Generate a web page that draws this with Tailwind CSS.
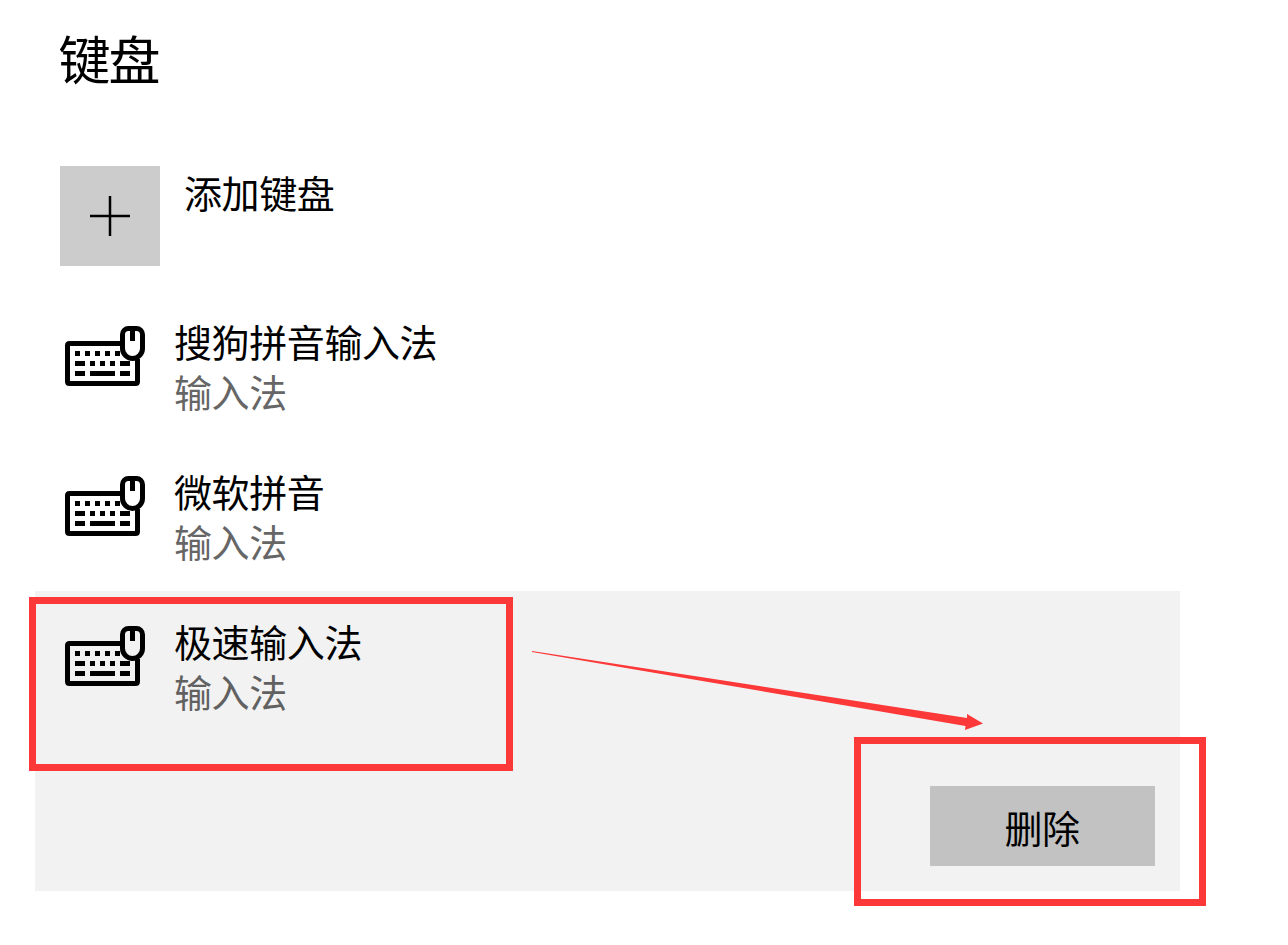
<!DOCTYPE html>
<html lang="zh-CN">
<head>
  <meta charset="UTF-8" />
  <meta name="viewport" content="width=device-width, initial-scale=1.0" />
  <title>键盘</title>
  <script src="https://cdn.jsdelivr.net/npm/@tailwindcss/browser@4"></script>
</head>
<body class="bg-white text-black font-['Noto_Sans_CJK_SC',sans-serif] min-h-screen overflow-hidden">
  <!-- Icono compartido -->
  <svg class="hidden">
    <symbol id="teclado" viewBox="0 0 80 60">
      <path d="M57 17.500H4.500Q2.500 17.500 2.500 19.500V55.500Q2.500 57.500 4.500 57.500H70.500Q72.500 57.500 72.500 55.500V33" fill="none" stroke="#000" stroke-width="5" />
      <path d="M10 25h5v5h-5zM20 25h5v5h-5zM30 25h5v5h-5zM40 25h5v5h-5zM50 25h5v5h-5zM10 35h10v5H10zM25 35h5v5h-5zM35 35h5v5h-5zM45 35h5v5h-5zM55 35h10v5H55zM10 45h10v5H10zM25 45h25v5H25zM55 45h10v5H55z" />
      <path d="M63.500 2.500H71.500A6 6 0 0 1 77.500 8.500V22.500A10 10 0 0 1 57.500 22.500V8.500A6 6 0 0 1 63.500 2.500Z" fill="none" stroke="#000" stroke-width="5" />
      <path d="M65 4h5v11h-5z" />
    </symbol>
  </svg>

  <main class="relative ml-[35px] w-[1145px]">
    <h1 class="h-[141px] pt-[21px] pl-[23.5px] text-[52px] leading-[74px] tracking-[-2px]">键盘</h1>

    <div class="flex h-[150px] pt-[25px] pl-[25px]">
      <button class="flex size-[100px] items-center justify-center bg-[#ccc]">
        <svg class="size-[40px]" viewBox="0 0 40 40" stroke="#000" stroke-width="2.500">
          <path d="M20 0V40M0 20H40" />
        </svg>
      </button>
      <span class="ml-[24px] text-[38px] leading-[51px] tracking-[-0.4px]">添加键盘</span>
    </div>

    <!-- Lista de teclados -->
    <div class="flex h-[150px] pt-[25px] pl-[30px]">
      <svg class="mt-[10px] h-[60px] w-[80px]"><use href="#teclado" /></svg>
      <div class="ml-[29px] text-[38px] leading-[50px] tracking-[-0.4px]">
        <p>搜狗拼音输入法</p>
        <p class="text-[#666]">输入法</p>
      </div>
    </div>

    <div class="flex h-[150px] pt-[25px] pl-[30px]">
      <svg class="mt-[10px] h-[60px] w-[80px]"><use href="#teclado" /></svg>
      <div class="ml-[29px] text-[38px] leading-[50px] tracking-[-0.4px]">
        <p>微软拼音</p>
        <p class="text-[#666]">输入法</p>
      </div>
    </div>

    <div class="flex h-[300px] flex-col justify-between bg-[#f2f2f2] p-[25px] pl-[30px]">
      <div class="flex">
        <svg class="mt-[10px] h-[60px] w-[80px]"><use href="#teclado" /></svg>
        <div class="ml-[29px] text-[38px] leading-[50px] tracking-[-0.4px]">
          <p>极速输入法</p>
          <p class="text-[#616161]">输入法</p>
        </div>
      </div>
      <button class="h-[80px] w-[225px] self-end bg-[#c2c2c2] pt-[1px] pr-[1px] text-[38px] leading-[75px] tracking-[-0.4px]">删除</button>
    </div>

    <!-- Marcas rojas -->
    <div class="absolute top-[597px] -left-[6px] h-[174px] w-[484px] border-[7px] border-[#fd3838]"></div>
    <div class="absolute top-[737px] left-[819px] h-[169px] w-[352px] border-[7px] border-[#fd3838]"></div>
    <svg class="absolute top-[640px] left-[485px] h-[100px] w-[480px]" viewBox="520 640 480 100">
      <path d="M532 651L967 718L967 714L983 723.500L965 730L965.500 726L532 652Z" fill="#fd3838" />
    </svg>
  </main>
</body>
</html>
